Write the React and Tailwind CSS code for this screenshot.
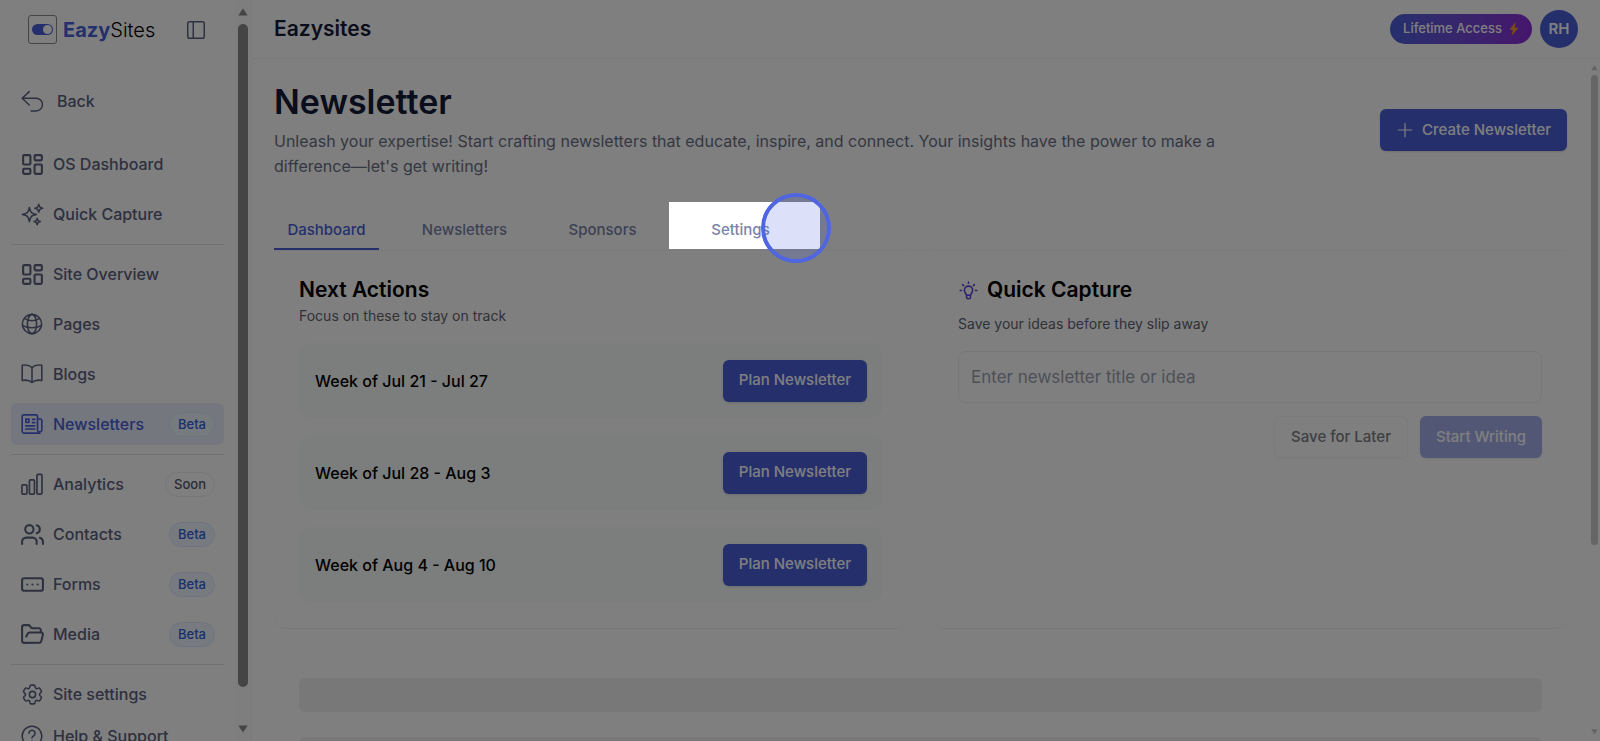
import * as React from "react"
import { clsx } from "clsx"
import { LayoutDashboard, Users, FolderOpen, RectangleEllipsis, PanelLeft } from "lucide-react"
import { HiOutlineSparkles, HiOutlineCog6Tooth } from "react-icons/hi2"

const svgProps = {
  viewBox: "0 0 24 24",
  fill: "none",
  stroke: "currentColor",
  strokeLinecap: "round",
  strokeLinejoin: "round",
  "aria-hidden": true,
}

function BackIcon({ className }) {
  return (
    <svg {...svgProps} strokeWidth="1.6" className={className}>
      <path d="M9 1.8 1.3 9 9 16.300M1.300 9h15.200a6.900 6.900 0 0 1 0 13.800H11" />
    </svg>
  )
}

function GlobeIcon({ className }) {
  return (
    <svg {...svgProps} strokeWidth="1.700" className={className}>
      <circle cx="12" cy="12" r="10.500" />
      <ellipse cx="12" cy="12" rx="5" ry="10.500" />
      <path d="M3.800 6C8 9.300 16 9.300 20.200 6M1.700 13.500c5.500 3.500 15.100 3.500 20.600 0" />
    </svg>
  )
}

function BookIcon({ className }) {
  return (
    <svg {...svgProps} strokeWidth="1.700" className={className}>
      <path d="M12 5C9.500 2.500 5.500 1.800 1.300 2.500V19c4.200-.7 8.200 0 10.700 2.300 2.500-2.300 6.500-3 10.700-2.300V2.500C18.500 1.800 14.500 2.500 12 5Zm0 0v16.300" />
    </svg>
  )
}

function NewsIcon({ className }) {
  return (
    <svg {...svgProps} strokeWidth="1.800" className={className}>
      <path d="M18 6.500h3A1.700 1.700 0 0 1 22.700 8v11a2.500 2.500 0 0 1-4.700 0V3.500A1.700 1.700 0 0 0 16.300 2H3a1.700 1.700 0 0 0-1.700 1.500v16A2.200 2.200 0 0 0 3.500 22h17M12.500 7H15M12.500 10.500H15M5 14h10M5 17.500h10" />
      <path d="M5.300 6.700h3.400v3.600H5.300z" />
    </svg>
  )
}

function ChartIcon({ className }) {
  return (
    <svg {...svgProps} strokeWidth="1.800" className={className}>
      <rect x="1" y="13" width="5.500" height="10" rx="1.200" />
      <rect x="9.200" y="7.500" width="5.500" height="15.500" rx="1.200" />
      <rect x="17.400" y="1.500" width="5.500" height="21.500" rx="1.200" />
    </svg>
  )
}

function HelpIcon({ className }) {
  return (
    <svg {...svgProps} strokeWidth="1.700" className={className}>
      <circle cx="12" cy="12" r="10.700" />
      <path d="M8.700 9a3.300 3.300 0 1 1 5 2.900c-1.100.7-1.700 1.200-1.700 2.300M12 17.500v.1" />
    </svg>
  )
}

function BulbIcon({ className }) {
  return (
    <svg {...svgProps} strokeWidth="2" className={className}>
      <path d="M12 1.200v1.600M1.500 12h1.700M20.800 12h1.700M4.600 4.600 5.800 5.800M19.400 4.600 18.200 5.800M9.500 18c0-2-2.700-3-2.700-6.300a5.200 5.200 0 0 1 10.400 0c0 3.300-2.700 4.300-2.700 6.300ZM9.500 18v2.500a2 2 0 0 0 2 2h1a2 2 0 0 0 2-2V18" />
    </svg>
  )
}

const navGroups = [
  [
    { label: "OS Dashboard", icon: LayoutDashboard, wide: true },
    { label: "Quick Capture", icon: HiOutlineSparkles, wide: true },
  ],
  [
    { label: "Site Overview", icon: LayoutDashboard, wide: true },
    { label: "Pages", icon: GlobeIcon },
    { label: "Blogs", icon: BookIcon },
    { label: "Newsletters", icon: NewsIcon, badge: "Beta", active: true },
  ],
  [
    { label: "Analytics", icon: ChartIcon, badge: "Soon" },
    { label: "Contacts", icon: Users, badge: "Beta", wide: true },
    { label: "Forms", icon: RectangleEllipsis, badge: "Beta", wide: true },
    { label: "Media", icon: FolderOpen, badge: "Beta", wide: true },
  ],
]

const weeks = ["Week of Jul 21 - Jul 27", "Week of Jul 28 - Aug 3", "Week of Aug 4 - Aug 10"]

function NavItem({ label, icon: Icon, badge, active, wide }) {
  return (
    <a
      href="#"
      className={clsx(
        "flex h-[42px] shrink-0 items-center rounded-md px-[9px] text-base font-medium",
        active ? "bg-[#ebeffe] text-[#4a5fd9]" : "text-[#5c6180]"
      )}
    >
      <span className="mr-[9px] flex size-6 shrink-0 items-center justify-center">
        <Icon className={clsx("shrink-0", wide ? "size-[25px]" : "size-[22px]")} />
      </span>
      {label}
      {badge && (
        <span
          className={clsx(
            "ml-auto rounded-full border px-2 text-[13px] leading-[23px]",
            badge === "Soon" ? "border-[#eeeeee] text-[#55585e]" : "border-[#dbe9fe] bg-[#eff6ff] text-[#2f62d9]"
          )}
        >
          {badge}
        </span>
      )}
    </a>
  )
}

function Scrollbar({ className, thumb }) {
  return (
    <div className={clsx("flex flex-col items-center", className)} aria-hidden="true">
      <svg viewBox="0 0 10 8" className="w-full shrink-0" fill="currentColor"><path d="M5 0.500 9.700 7.500H.3Z" /></svg>
      <div className={clsx("w-full rounded-full bg-current", thumb)} />
      <svg viewBox="0 0 10 8" className="mt-auto w-full shrink-0" fill="currentColor"><path d="M5 7.500 9.700.5H.3Z" /></svg>
    </div>
  )
}

function Sidebar() {
  return (
    <aside className="flex h-screen w-[252px] shrink-0 border-r border-[#f6f6f7]">
      <div className="flex min-w-0 flex-1 flex-col overflow-hidden px-[11px]">
        <div className="flex h-[59px] shrink-0 items-center pl-[17px] pr-[17px]">
          <div className="flex size-[29px] items-center justify-center rounded-[3px] border border-[#8a8a8a]">
            <div className="flex h-[11px] w-[21px] justify-end rounded-full bg-[#4a5fd9] p-px">
              <div className="size-[9px] rounded-full bg-white" />
            </div>
          </div>
          <div className="ml-[6px] text-[20px] text-black">
            <span className="font-bold text-[#4a5fd9]">Eazy</span>
            <span className="font-light">Sites</span>
          </div>
          <button aria-label="Toggle sidebar" className="ml-auto text-[#5c6180]">
            <PanelLeft className="size-[22px]" strokeWidth={1.6} />
          </button>
        </div>
        <a href="#" className="mt-[21px] mb-[21px] flex h-[42px] shrink-0 items-center px-[10px] text-base font-medium text-[#5c6180]">
          <BackIcon className="mr-[14px] size-[22px] shrink-0" />
          Back
        </a>
        <nav className="flex flex-col">
          {navGroups.map((group, i) => (
            <div key={i} className="mb-2 flex flex-col gap-2 border-b border-[#dfe2ea] pb-[9px]">
              {group.map((item) => (
                <NavItem key={item.label} {...item} />
              ))}
            </div>
          ))}
          <NavItem label="Site settings" icon={HiOutlineCog6Tooth} wide />
          <NavItem label="Help & Support" icon={HelpIcon} />
        </nav>
      </div>
      <div className="w-4 shrink-0 bg-[#fcfcfc] px-[3px]">
        <Scrollbar className="h-full py-2 text-[#8a8a8a]" thumb="mt-2 h-[663px]" />
      </div>
    </aside>
  )
}

function PrimaryButton({ children, className, ...props }) {
  return (
    <button
      className={clsx(
        "flex h-[42px] items-center justify-center rounded-md bg-[#4a5fd9] px-4 text-[15px] font-medium text-white shadow-sm",
        className
      )}
      {...props}
    >
      {children}
    </button>
  )
}

// Highlights the current step of the product tour and dims the rest of the page
function TourSpotlight() {
  return (
    <>
      <div className="pointer-events-none absolute -left-[19px] -top-[3px] z-40 h-[47px] w-[151px] shadow-[0_0_0_2000px_rgba(0,0,0,0.5)]" />
      <div className="pointer-events-none absolute left-[73px] -top-3 z-50 size-[70px] rounded-full border-4 border-[#4f66e0] bg-[#4f66e0]/20" />
    </>
  )
}

function Tabs() {
  const tabs = ["Dashboard", "Newsletters", "Sponsors", "Settings"]
  return (
    <div className="mt-[26px] flex gap-[33px] border-b border-[#f6f6f8]" role="tablist">
      {tabs.map((tab, i) => (
        <div key={tab} className="relative w-[105px]">
          <button
            role="tab"
            aria-selected={i === 0}
            className={clsx(
              "h-[45px] w-full border-b-2 pt-2 text-[15px] font-medium",
              i === 0 ? "border-[#4a5fd9] text-[#4a5fd9]" : "border-transparent text-[#7a83ab]"
            )}
          >
            {tab}
          </button>
          {tab === "Settings" && <TourSpotlight />}
        </div>
      ))}
    </div>
  )
}

function NextActions() {
  return (
    <section className="rounded-b-xl border border-t-0 border-[#fdfdfd] p-6 pb-[25px] shadow-2xs">
      <h2 className="text-[21px] leading-[30px] font-semibold text-black">Next Actions</h2>
      <p className="text-sm leading-[22px] text-[#5f6470]">Focus on these to stay on track</p>
      <div className="mt-4 flex flex-col gap-[17px]">
        {weeks.map((week) => (
          <div key={week} className="flex h-[75px] items-center justify-between rounded-xl bg-[#f8fbfa] px-4">
            <span className="text-base font-medium text-black">{week}</span>
            <PrimaryButton>Plan Newsletter</PrimaryButton>
          </div>
        ))}
      </div>
    </section>
  )
}

function QuickCapture() {
  return (
    <section className="rounded-b-xl border border-t-0 border-[#fdfdfd] p-6 shadow-2xs">
      <h2 className="flex items-center text-[21px] leading-[30px] font-semibold text-black">
        <BulbIcon className="mr-2 size-[21px] p-px text-[#5b45d9]" />
        Quick Capture
      </h2>
      <label htmlFor="idea" className="mt-2 block text-sm leading-[22px] text-[#5f6470]">
        Save your ideas before they slip away
      </label>
      <input
        id="idea"
        type="text"
        placeholder="Enter newsletter title or idea"
        className="mt-4 h-[52px] w-full rounded-lg border border-[#efeff2] px-3 text-[17px] placeholder:text-[#9a9fb0]"
      />
      <div className="mt-[13px] flex justify-end gap-3">
        <button className="h-[42px] rounded-md border border-[#f6f6f8] px-4 text-[15px] font-medium text-[#7d7f86] shadow-xs">Save for Later</button>
        <PrimaryButton disabled className="opacity-50">Start Writing</PrimaryButton>
      </div>
    </section>
  )
}

export default function App() {
  return (
    <div className="flex h-screen overflow-hidden bg-white font-[Inter,sans-serif]">
      <Sidebar />
      <div className="flex min-w-0 flex-1 flex-col">
        <header className="flex h-[59px] shrink-0 items-center border-b border-[#f1f2f4] pl-[22px] pr-[22px]">
          <span className="text-[21px] font-semibold text-[#141a38]">Eazysites</span>
          <button className="ml-auto flex h-[30px] items-center rounded-full bg-linear-to-r from-[#4a5fd9] to-[#8b2bd9] px-[13px] text-[13px] font-medium text-white">
            Lifetime Access
            <svg viewBox="0 0 10 14" className="ml-[7px] h-[14px]" fill="#f59a2b" aria-hidden="true"><path d="M6.500 0 .5 7.800h3.300L2.500 14l7-8.300H5.700Z" /></svg>
          </button>
          <button className="ml-2 size-[38px] rounded-full bg-[#4a5fd9] text-[15px] font-semibold text-white">RH</button>
        </header>
        <div className="flex min-h-0 flex-1">
          <main className="min-w-0 flex-1 pt-[21px] pl-[22px] pr-6">
            <div className="flex items-start justify-between">
              <div className="max-w-[980px]">
                <h1 className="text-[34px] leading-[44px] font-semibold text-[#141a38]">Newsletter</h1>
                <p className="mt-[5px] text-base leading-[25px] text-[#6a7086]">
                  Unleash your expertise! Start crafting newsletters that educate, inspire, and connect. Your insights have the power to make a difference—let's get writing!
                </p>
              </div>
              <PrimaryButton className="mt-[29px]">
                <svg {...svgProps} strokeWidth="1.600" className="mr-2 size-[18px]"><path d="M12 3v18M3 12h18" /></svg>
                Create Newsletter
              </PrimaryButton>
            </div>
            <Tabs />
            <div className="grid grid-cols-2 gap-[25px]">
              <NextActions />
              <QuickCapture />
            </div>
            <section className="mt-[25px] flex flex-col gap-[25px] border-x border-[#fdfdfd] px-6 pt-[25px]" aria-busy="true">
              <div className="h-[34px] rounded-md bg-[#f1f1f2]" />
              <div className="h-[34px] rounded-md bg-[#f1f1f2]" />
            </section>
          </main>
          <Scrollbar className="w-[9px] shrink-0 py-[6px] pr-[2px] text-[#cacaca]" thumb="mt-1 h-[470px]" />
        </div>
      </div>
    </div>
  )
}
